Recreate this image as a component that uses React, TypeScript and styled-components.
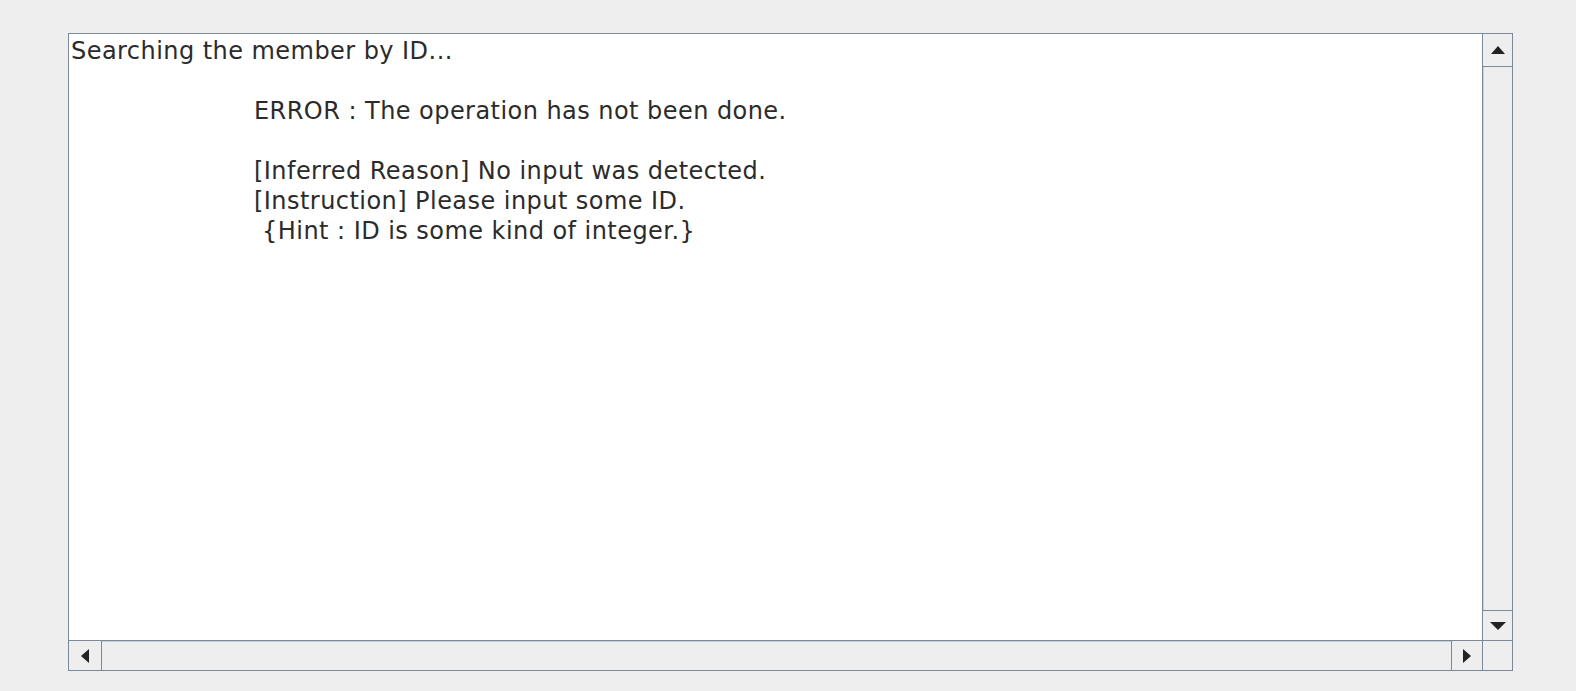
import React from "react";
import styled, { createGlobalStyle } from "styled-components";

const Global = createGlobalStyle`
  html, body { margin: 0; padding: 0; background: #eeeeee; }
  body { width: 1576px; height: 691px; overflow: hidden; }
`;

const Page = styled.div`
  box-sizing: border-box;
  width: 1576px;
  height: 691px;
  padding: 33px 0 0 68px;
  background: #eeeeee;
`;

const Frame = styled.div`
  box-sizing: border-box;
  width: 1445px;
  height: 638px;
  border: 1px solid #7a8a99;
  display: grid;
  grid-template-columns: 1fr 30px;
  grid-template-rows: 1fr 30px;
  background: #eeeeee;
`;

const TextArea = styled.div`
  background: #ffffff;
  padding: 2px 2px;
  font-family: "DejaVu Sans", "Liberation Sans", sans-serif;
  font-size: 24px;
  line-height: 30px;
  letter-spacing: 0.45px;
  color: #2b2b2b;
  white-space: pre;
  overflow: hidden;
`;

const Line = styled.div<{ $indent?: number }>`
  height: 30px;
  padding-left: ${(p) => p.$indent ?? 0}px;
`;

const VScroll = styled.div`
  box-sizing: border-box;
  border-left: 1px solid #7a8a99;
  display: flex;
  flex-direction: column;
`;

const HScroll = styled.div`
  box-sizing: border-box;
  border-top: 1px solid #7a8a99;
  display: flex;
  flex-direction: row;
`;

const Corner = styled.div`
  box-sizing: border-box;
  border-top: 1px solid #7a8a99;
  border-left: 1px solid #7a8a99;
  background: #eeeeee;
`;

const VButton = styled.div<{ $pos: "top" | "bottom" }>`
  box-sizing: border-box;
  height: 33px;
  flex: 0 0 auto;
  background: #eeeeee;
  display: flex;
  align-items: center;
  justify-content: center;
  ${(p) =>
    p.$pos === "top"
      ? "border-bottom: 1px solid #7a8a99;"
      : "border-top: 1px solid #7a8a99; height: 30px;"}
`;

const VTrack = styled.div`
  flex: 1 1 auto;
  background: #eeeeee;
  border-left: 1px solid #c5d3e0;
`;

const HButton = styled.div<{ $pos: "left" | "right" }>`
  box-sizing: border-box;
  width: 33px;
  flex: 0 0 auto;
  background: #eeeeee;
  display: flex;
  align-items: center;
  justify-content: center;
  ${(p) =>
    p.$pos === "left"
      ? "border-right: 1px solid #7a8a99;"
      : "border-left: 1px solid #7a8a99; width: 31px;"}
`;

const HTrack = styled.div`
  flex: 1 1 auto;
  background: #eeeeee;
  border-top: 1px solid #c5d3e0;
`;

type Dir = "up" | "down" | "left" | "right";

const Arrow = ({ dir }: { dir: Dir }) => {
  const pts: Record<Dir, string> = {
    up: "0,8 14,8 7,0",
    down: "0,0 16,0 8,8",
    left: "8,0 8,14 0,7",
    right: "0,0 0,14 8,7",
  };
  const w = dir === "up" ? 14 : dir === "down" ? 16 : 8;
  const h = dir === "up" || dir === "down" ? 8 : 14;
  return (
    <svg width={w} height={h} viewBox={`0 0 ${w} ${h}`}>
      <polygon points={pts[dir]} fill="#222222" />
    </svg>
  );
};

export default function App() {
  return (
    <>
      <Global />
      <Page>
        <Frame>
          <TextArea>
            <Line>Searching the member by ID...</Line>
            <Line />
            <Line $indent={183}>ERROR : The operation has not been done.</Line>
            <Line />
            <Line $indent={183}>[Inferred Reason] No input was detected.</Line>
            <Line $indent={183}>[Instruction] Please input some ID.</Line>
            <Line $indent={183}> {"{"}Hint : ID is some kind of integer.{"}"}</Line>
          </TextArea>
          <VScroll>
            <VButton $pos="top">
              <Arrow dir="up" />
            </VButton>
            <VTrack />
            <VButton $pos="bottom">
              <Arrow dir="down" />
            </VButton>
          </VScroll>
          <HScroll>
            <HButton $pos="left">
              <Arrow dir="left" />
            </HButton>
            <HTrack />
            <HButton $pos="right">
              <Arrow dir="right" />
            </HButton>
          </HScroll>
          <Corner />
        </Frame>
      </Page>
    </>
  );
}
